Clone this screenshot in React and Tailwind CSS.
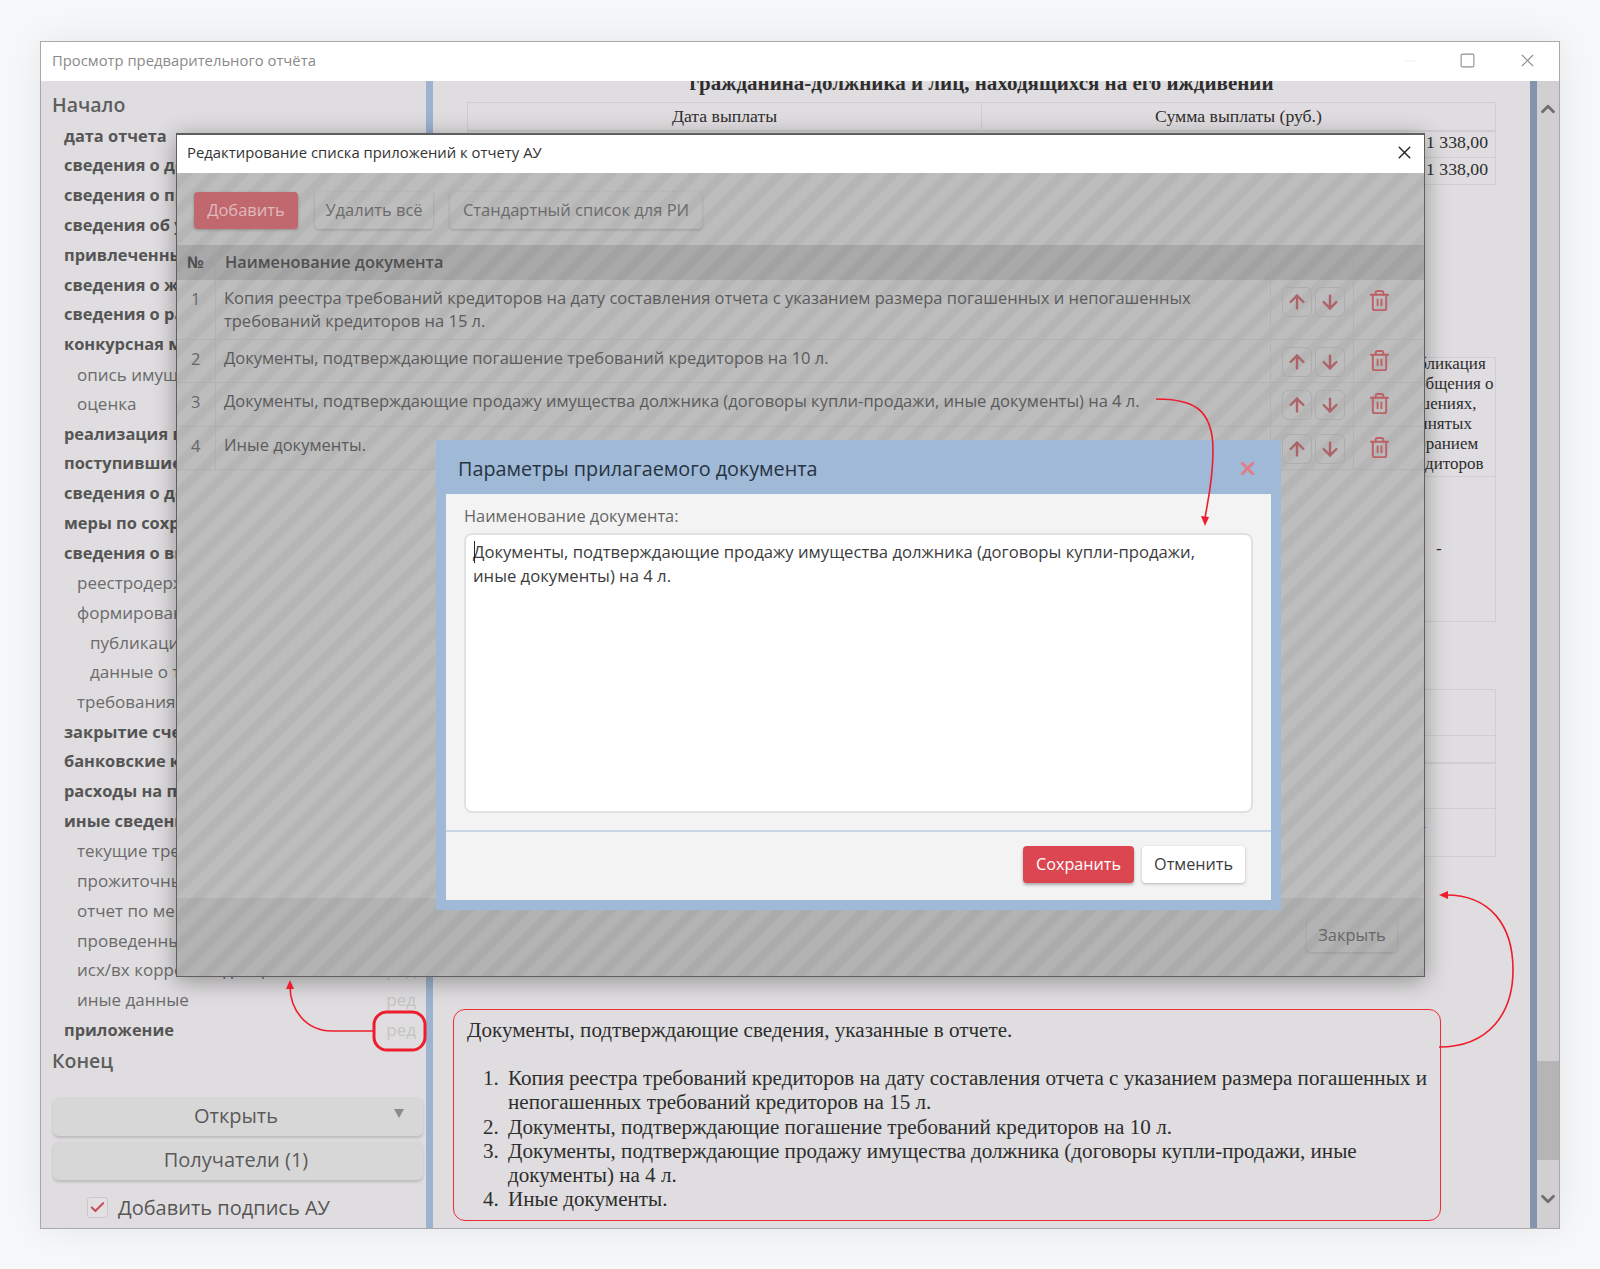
import { ArrowUp, ArrowDown, Trash2, X, ChevronUp, ChevronDown, Check, Minus, Square } from "lucide-react"

// level: 0 bold, 1 sub item, 2 sub-sub item
const menu = [
  ["дата отчета", 0],
  ["сведения о должнике", 0],
  ["сведения о процедуре", 0],
  ["сведения об управляющем", 0],
  ["привлеченные специалисты", 0],
  ["сведения о жилье", 0],
  ["сведения о работе", 0],
  ["конкурсная масса", 0],
  ["опись имущества", 1],
  ["оценка", 1],
  ["реализация имущества", 0],
  ["поступившие средства", 0],
  ["сведения о доходах", 0],
  ["меры по сохранности", 0],
  ["сведения о вкладах", 0],
  ["реестродержатель", 1],
  ["формирование реестра", 1],
  ["публикации", 2],
  ["данные о торгах", 2],
  ["требования", 1],
  ["закрытие счетов", 0],
  ["банковские карты", 0],
  ["расходы на процедуру", 0],
  ["иные сведения", 0],
  ["текущие требования", 1],
  ["прожиточный минимум", 1],
  ["отчет по мерам", 1],
  ["проведенные собрания", 1],
  ["исх/вх корреспонденция", 1],
  ["иные данные", 1],
  ["приложение", 0],
]

const docs = [
  {
    n: 1,
    text: "Копия реестра требований кредиторов на дату составления отчета с указанием размера погашенных и непогашенных требований кредиторов на 15 л.",
    h: "h-[60px]",
  },
  { n: 2, text: "Документы, подтверждающие погашение требований кредиторов на 10 л.", h: "h-[43px]" },
  {
    n: 3,
    text: "Документы, подтверждающие продажу имущества должника (договоры купли-продажи, иные документы) на 4 л.",
    h: "h-[44px]",
  },
  { n: 4, text: "Иные документы.", h: "h-[43px]" },
]

function MenuRow({ label, level }) {
  const indent = level === 0 ? "pl-[23px] text-[16.4px] font-bold text-[#555]" : level === 1 ? "pl-[36px] text-[17px] text-[#6b6b6b]" : "pl-[49px] text-[17px] text-[#6b6b6b]"
  return (
    <div className={`flex h-[29.8px] items-center justify-between pr-[10px] whitespace-nowrap ${indent}`}>
      <span>{label}</span>
      <span className="text-[17px] font-normal text-[#c4c4c4]">ред</span>
    </div>
  )
}

function ArrowBtn({ children }) {
  return (
    <div className="flex h-[30px] w-[30px] items-center justify-center rounded-md border border-[#adadad] text-[#ad6468]">
      {children}
    </div>
  )
}

function DocRow({ doc }) {
  return (
    <div className={`flex border-b border-[#ababab]/60 ${doc.h}`}>
      <div className="w-[39px] shrink-0 border-r border-[#ababab]/60 pt-[7px] pl-[14px] text-[#666]">{doc.n}</div>
      <div className="flex-1 pt-[7px] pl-[8px] pr-[60px] leading-[22.5px] text-[#5b5b5b]">{doc.text}</div>
      <div className="flex w-[84px] shrink-0 gap-[3px] border-x border-[#ababab]/60 pt-[7px] pl-[11px]">
        <ArrowBtn><ArrowUp size={22} strokeWidth={2.6} /></ArrowBtn>
        <ArrowBtn><ArrowDown size={22} strokeWidth={2.6} /></ArrowBtn>
      </div>
      <div className="flex w-[70px] shrink-0 justify-start pt-[9px] pl-[14px] text-[#bd6166]">
        <Trash2 size={23} strokeWidth={2} />
      </div>
    </div>
  )
}

function ReportBox() {
  return (
    <div className="ml-[20px] mt-auto mb-[7px] h-[212px] w-[988px] rounded-xl border-[1.5px] border-[#ef2b38] pl-[13px] pt-[8px] font-['Liberation_Serif',serif] text-[21.1px] leading-[24.2px] text-[#2d2d2d]">
      <p>Документы, подтверждающие сведения, указанные в отчете.</p>
      <ol className="mt-[24px] list-decimal pl-[37px] pr-[10px] [&>li]:pl-[4px]">
        <li>Копия реестра требований кредиторов на дату составления отчета с указанием размера погашенных и непогашенных требований кредиторов на 15 л.</li>
        <li>Документы, подтверждающие погашение требований кредиторов на 10 л.</li>
        <li>Документы, подтверждающие продажу имущества должника (договоры купли-продажи, иные документы) на 4 л.</li>
        <li>Иные документы.</li>
      </ol>
    </div>
  )
}

function Report() {
  return (
    <div className="flex min-w-0 flex-1 flex-col overflow-hidden font-['Liberation_Serif',serif] text-[#2e2e2e]">
      <p className="-mt-[10px] h-[24px] text-center text-[21px] font-bold leading-[24px] whitespace-nowrap">
        гражданина-должника и лиц, находящихся на его иждивении
      </p>
      <div className="ml-[34px] mt-[7px] w-[1029px] border border-[#d0cfd0] text-[17.7px]">
        <div className="flex h-[29px] items-center border-b-2 border-[#cfcdcf] text-center">
          <div className="w-[514px] border-r border-[#d0cfd0]">Дата выплаты</div>
          <div className="flex-1">Сумма выплаты (руб.)</div>
        </div>
        <div className="flex h-[26px] items-center justify-end border-b border-[#d0cfd0] pr-[7px] pb-[4px]">1 338,00</div>
        <div className="flex h-[26px] items-center justify-end pr-[7px] pb-[4px]">1 338,00</div>
      </div>

      <div className="ml-[34px] mt-[172px] w-[1029px] border border-[#d0cfd0] text-[17px] leading-[20px]">
        <div className="h-[123px] border-b border-[#d0cfd0] pl-[933px] whitespace-nowrap -mt-[4px]">
          <p>публикация</p>
          <p>сообщения о</p>
          <p>решениях,</p>
          <p>принятых</p>
          <p>собранием</p>
          <p>кредиторов</p>
        </div>
        <div className="flex h-[144px] items-center pl-[968px]">-</div>
      </div>

      <div className="ml-[34px] mt-[67px] w-[1029px] border border-[#d0cfd0] text-[17.7px]">
        <div className="h-[46px] border-b border-[#d0cfd0]" />
        <div className="h-[28px] border-b-2 border-[#d0cfd0]" />
        <div className="h-[45px] border-b border-[#d0cfd0]" />
        <div className="h-[47px] pl-[950px] pt-[1px] leading-[24px]">а</div>
      </div>

      <ReportBox />
    </div>
  )
}

function Sidebar() {
  return (
    <div className="w-[385px] shrink-0 overflow-hidden">
      <div className="mt-[8px] flex h-[32px] items-center pl-[11px] text-[19.5px] font-semibold text-[#5e5e5e]">Начало</div>
      {menu.map(([label, level]) => (
        <MenuRow key={label} label={label} level={level} />
      ))}
      <div className="flex h-[32px] items-center pl-[11px] text-[19.5px] font-semibold text-[#5e5e5e]">Конец</div>

      <div className="mt-[20px] ml-[12px] w-[370px]">
        <div className="relative flex h-[39px] items-center justify-center rounded-md bg-[#d8d7d8] pr-[4px] text-[20px] text-[#5a5a5a] shadow-[0_2px_3px_rgba(0,0,0,0.16)]">
          Открыть
          <span className="absolute right-[19px] top-[12px] h-0 w-0 border-x-[5px] border-t-[9px] border-x-transparent border-t-[#8b8b8b]" />
        </div>
        <div className="mt-[5px] flex h-[39px] items-center justify-center rounded-md bg-[#d8d7d8] pr-[4px] text-[20px] text-[#5a5a5a] shadow-[0_2px_3px_rgba(0,0,0,0.16)]">
          Получатели (1)
        </div>
      </div>
      <div className="mt-[13px] ml-[46px] flex items-center gap-[10px] text-[20px] text-[#565656]">
        <div className="flex h-[21px] w-[21px] items-center justify-center rounded-[3px] border border-[#c9c9c9] bg-[#e2e0e2] text-[#c7505c]">
          <Check size={17} strokeWidth={3} />
        </div>
        Добавить подпись АУ
      </div>
    </div>
  )
}

function ParamsModal() {
  return (
    <div className="absolute left-[436px] top-[440px] flex h-[470px] w-[845px] flex-col bg-[#a0b9d6] px-[10px] pb-[10px]">
      <div className="flex h-[54px] shrink-0 items-center justify-between pl-[12px] pr-[13px] pt-[3px] text-[19.8px] text-[#263342]">
        Параметры прилагаемого документа
        <X size={21} strokeWidth={3.2} className="text-[#e37a86]" />
      </div>
      <div className="flex flex-1 flex-col bg-[#f3f3f3]">
        <div className="h-[338px] border-b-2 border-[#c9d6e6] px-[18px] pt-[10px]">
          <p className="h-[29px] text-[16.4px] leading-[24px] text-[#666]">Наименование документа:</p>
          <div className="relative h-[280px] rounded-lg border-2 border-[#e1e1e1] bg-white px-[7px] pt-[5px] text-[16.66px] leading-[24px] text-[#3c3c3c]">
            Документы, подтверждающие продажу имущества должника (договоры купли-продажи,
            <br />
            иные документы) на 4 л.
            <span className="absolute left-[8px] top-[6px] h-[22px] w-px bg-[#222]" />
          </div>
        </div>
        <div className="flex flex-1 justify-end gap-[8px] pt-[14px] pr-[26px]">
          <div className="flex h-[37px] w-[111px] items-center justify-center rounded bg-[#dc4651] text-[16.2px] text-[#fff] shadow-[0_2px_3px_rgba(0,0,0,0.3)]">
            Сохранить
          </div>
          <div className="flex h-[37px] w-[103px] items-center justify-center rounded bg-white text-[16.2px] text-[#3c3c3c] shadow-[0_1px_3px_rgba(0,0,0,0.25)]">
            Отменить
          </div>
        </div>
      </div>
    </div>
  )
}

function ListDialog() {
  return (
    <div className="absolute left-[176px] top-[133px] flex h-[844px] w-[1249px] flex-col border-t-2 border-r border-b border-l border-[#5f5f5f] bg-[repeating-linear-gradient(135deg,#bdbdbd_0,#bdbdbd_8px,#b5b5b5_11px,#b5b5b5_17px,#bdbdbd_20px)] shadow-[0_4px_22px_rgba(0,0,0,0.35)]">
      <div className="flex h-[38px] shrink-0 items-center justify-between bg-white pb-[4px] pl-[10px] pr-[9px] text-[14.85px] text-[#333]">
        Редактирование списка приложений к отчету АУ
        <X size={21} strokeWidth={1.6} className="text-[#222]" />
      </div>

      <div className="flex gap-[17px] pl-[17px] pt-[19px] text-[16.5px] text-[#6b6b6b]">
        <div className="flex h-[37px] w-[104px] items-center justify-center rounded bg-[#c1686e] text-[#dfb9bb] shadow-[0_1px_3px_rgba(0,0,0,0.25)]">Добавить</div>
        <div className="flex h-[37px] w-[118px] items-center justify-center rounded shadow-[0_1px_3px_rgba(0,0,0,0.18)]">Удалить всё</div>
        <div className="flex h-[37px] w-[252px] items-center justify-center rounded shadow-[0_1px_3px_rgba(0,0,0,0.18)]">Стандартный список для РИ</div>
      </div>

      <div className="mt-[16px] flex h-[35px] shrink-0 items-center bg-black/10 text-[16.3px] font-semibold text-[#505050]">
        <div className="flex h-full w-[39px] items-center border-r border-[#a5a5a5] pl-[10px] font-bold">№</div>
        <div className="flex-1 pl-[9px]">Наименование документа</div>
        <div className="h-full w-[84px] border-x border-[#a5a5a5]" />
        <div className="w-[70px]" />
      </div>

      <div className="text-[16.5px]">
        {docs.map(doc => (
          <DocRow key={doc.n} doc={doc} />
        ))}
      </div>

      <div className="mt-auto flex h-[78px] justify-end bg-black/5 pt-[21px] pr-[27px]">
        <div className="flex h-[33px] w-[90px] items-center justify-center rounded text-[16.5px] text-[#666] shadow-[0_1px_3px_rgba(0,0,0,0.12)]">Закрыть</div>
      </div>
    </div>
  )
}

// hand-drawn red arrows from the original annotation
function Annotations() {
  return (
    <svg className="pointer-events-none absolute left-0 top-0" width="1600" height="1269" fill="none">
      <g stroke="#ee1c2c" strokeWidth="1.6">
        <path d="M1156 399 C1192 399 1213 408 1213 450 C1213 480 1208 500 1205 518" />
        <path d="M374 1031 L332 1031 C306 1031 290 1010 290 986" />
        <path d="M1439 1047 C1490 1047 1513 1012 1513 970 C1513 925 1490 895 1446 895" />
        <rect x="374" y="1012" width="51" height="38" rx="13" strokeWidth="3" />
      </g>
      <g fill="#ee1c2c">
        <path d="M1205 526 L1201 516 L1209 517 Z" />
        <path d="M290 980 L286 989 L294 989 Z" />
        <path d="M1439 895 L1448 891 L1448 899 Z" />
      </g>
    </svg>
  )
}

export default function App() {
  return (
    <div className="relative h-[1269px] overflow-hidden bg-[#f7f8fa] font-['Open_Sans',sans-serif]">
      <div className="absolute left-[40px] top-[41px] flex h-[1188px] w-[1520px] flex-col border border-[#a9a9a9] bg-[#dfdddf] shadow-[0_0_40px_rgba(0,0,0,0.08)]">
        <div className="relative z-10 flex h-[39px] shrink-0 items-center justify-between bg-white pb-[2px] pl-[11px] pr-[21px] text-[14.8px] text-[#8a8a8a]">
          Просмотр предварительного отчёта
          <div className="flex items-center gap-[41px] text-[#8d8d8d]">
            <Minus size={16} strokeWidth={1} className="text-[#e6e6e6]" />
            <Square size={17} strokeWidth={1.5} />
            <X size={21} strokeWidth={1.3} />
          </div>
        </div>
        <div className="flex min-h-0 flex-1">
          <Sidebar />
          <div className="w-[7px] shrink-0 bg-[#9db2cf]" />
          <Report />
          <div className="w-[7px] shrink-0 bg-[#8494ad]" />
          <div className="flex w-[22px] shrink-0 flex-col items-center bg-[#d1cfd1] text-[#6e6e6e]">
            <ChevronUp size={22} strokeWidth={3} className="mt-[17px]" />
            <div className="mt-[941px] h-[99px] w-full bg-[#b6b5b6]" />
            <ChevronDown size={22} strokeWidth={3} className="mt-[28px]" />
          </div>
        </div>
      </div>
      <ListDialog />
      <ParamsModal />
      <Annotations />
    </div>
  )
}
